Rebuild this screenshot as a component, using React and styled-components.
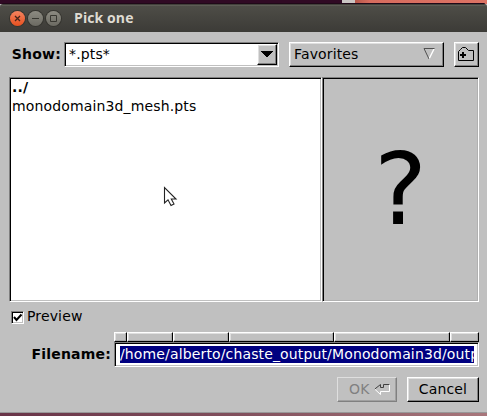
import React from "react";
import styled, { createGlobalStyle, css } from "styled-components";

const GlobalStyle = createGlobalStyle`
  * { box-sizing: border-box; }
  body { margin: 0; overflow: hidden; background: #c0c0c0; }
`;

const raised = css`
  border: 1px solid;
  border-color: #fff #000 #000 #fff;
  box-shadow: inset -1px -1px 0 #808080, inset 1px 1px 0 #dfdfdf;
`;

const sunken = css`
  border: 1px solid;
  border-color: #808080 #fff #fff #808080;
  box-shadow: inset 1px 1px 0 #000, inset -1px -1px 0 #c0c0c0;
`;

const Screen = styled.div`
  width: 487px;
  height: 416px;
  display: flex;
  flex-direction: column;
  overflow: hidden;
  background: #c0c0c0;
  font: 14px/18px "DejaVu Sans", sans-serif;
  letter-spacing: 0.14px;
  color: #000;
  cursor: default;
`;

const Desktop = styled.div`
  height: 4px;
  flex: none;
  background: linear-gradient(90deg, #300a24 0 342px, #cac5c3 342px 355px, #b5574a 355px, #d76c5e 370px, #dd7364 100%);
`;

const TitleBar = styled.header`
  height: 28px;
  flex: none;
  display: flex;
  align-items: center;
  padding-left: 10px;
  border-top: 1px solid #42413b;
  border-radius: 3px 3px 0 0;
  background: linear-gradient(#5d5c55 0 1px, #4e4d47 1px, #3c3b37 100%);
  box-shadow: 0 -3px 0 -2px #200818;
`;

const WindowButton = styled.span`
  width: 15px;
  height: 15px;
  margin-right: 3px;
  border-radius: 50%;
  box-shadow: 0 0 0 1px #35342f;
  background: ${(p) => (p.$close ? "linear-gradient(#f58460, #e6501f)" : "linear-gradient(#8d8b82, #6b6a62)")};
  svg { display: block; }
`;

const Title = styled.h1`
  margin: 0 0 1px 10px;
  font: bold 14px/18px "Open Sans", sans-serif;
  letter-spacing: 0.1px;
  color: #dfdbd2;
`;

const Dialog = styled.main`
  height: 381px;
  flex: none;
  padding: 10px 8px 0 9px;
  border-bottom: 1px solid #989898;
  display: flex;
  flex-direction: column;
`;

const Shadow = styled.div`
  height: 3px;
  background: linear-gradient(90deg, #683347, #82505d 50%, #a8767b);
`;

const Toolbar = styled.div`
  display: flex;
  height: 25px;
`;

const Label = styled.label`
  width: ${(p) => p.$width}px;
  padding-right: 3px;
  text-align: right;
  font-weight: bold;
  line-height: 25px;
  letter-spacing: 0.2px;
  white-space: nowrap;
`;

const Combo = styled.div`
  ${sunken}
  width: 215px;
  padding: 1px 1px 1px 4px;
  display: flex;
  justify-content: space-between;
  background: #fff;
  line-height: 21px;
`;

const ComboArrow = styled.span`
  ${raised}
  width: 20px;
  height: 21px;
  display: grid;
  place-items: center;
  background: #c0c0c0;
`;

const Button = styled.button`
  ${raised}
  width: ${(p) => p.$width}px;
  height: 25px;
  margin: 0 0 0 10px;
  padding: ${(p) => p.$padding || "0 0 2px"};
  display: flex;
  align-items: center;
  justify-content: ${(p) => p.$justify || "center"};
  background: #c0c0c0;
  color: #000;
  font: inherit;
  letter-spacing: inherit;
  border-radius: 0;
  svg { flex: none; }
  &:disabled {
    color: #808080;
    border-color: #dfdfdf #808080 #808080 #dfdfdf;
    box-shadow: inset -1px -1px 0 #a0a0a0;
  }
`;

const Panes = styled.div`
  display: flex;
  height: 225px;
  margin-top: 10px;
`;

const FileList = styled.div`
  ${sunken}
  position: relative;
  width: 313px;
  padding: 0 2px;
  background: #fff;
`;

const FileRow = styled.div`
  height: 19px;
  line-height: 18px;
  font-weight: ${(p) => (p.$folder ? "bold" : "normal")};
`;

const Pointer = styled.svg`
  position: absolute;
  left: 153px;
  top: 108px;
`;

const PreviewPane = styled.div`
  ${sunken}
  width: 157px;
  box-shadow: inset 1px 1px 0 #000, inset -1px -1px 0 #b0b0b0;
  text-align: center;
  font-size: 100px;
  line-height: 223px;
`;

const PreviewOption = styled.label`
  display: flex;
  align-items: center;
  height: 18px;
  margin: 6px 0 0 2px;
  gap: 3px;
`;

const OptionText = styled.span`
  padding-bottom: 2px;
`;

const Check = styled.span`
  ${sunken}
  width: 13px;
  height: 13px;
  background: #fff;
  svg { display: block; }
`;

const PathRow = styled.div`
  display: flex;
  align-items: flex-end;
  margin-top: 6px;
`;

const PathField = styled.div`
  width: 365px;
`;

const PathSegments = styled.div`
  display: grid;
  grid-template-columns: 13px 46px 56px 105px 116px 29px;
  height: 10px;
`;

const Segment = styled.span`
  ${raised}
  box-shadow: inset -1px -1px 0 #a8a8a8, inset 1px 1px 0 #dfdfdf;
`;

const FilenameInput = styled.div`
  ${sunken}
  height: 25px;
  padding: 3px 4px 3px 5px;
  background: #fff;
`;

const Selection = styled.div`
  height: 17px;
  overflow: hidden;
  white-space: nowrap;
  line-height: 17px;
  background: #000080;
  color: #fff;
`;

const Actions = styled.div`
  display: flex;
  justify-content: flex-end;
  margin-top: 10px;
`;

const SEGMENTS = ["root", "home", "user", "output", "project", "folder"];

export default function App() {
  return (
    <Screen>
      <GlobalStyle />
      <Desktop />
      <TitleBar>
        <WindowButton $close>
          <svg width="15" height="15"><path d="M5 5l5 5M10 5l-5 5" stroke="#46251b" strokeWidth="1.3" /></svg>
        </WindowButton>
        <WindowButton>
          <svg width="15" height="15"><path d="M4 7.5h7" stroke="#383731" /></svg>
        </WindowButton>
        <WindowButton>
          <svg width="15" height="15"><path d="M4.5 4.5h6v6h-6z" stroke="#383731" fill="none" /></svg>
        </WindowButton>
        <Title>Pick one</Title>
      </TitleBar>
      <Dialog>
        <Toolbar>
          <Label $width={55}>Show:</Label>
          <Combo>
            *.pts*
            <ComboArrow>
              <svg width="12" height="7" shapeRendering="crispEdges"><path d="M0 0h12L6 6.5z" /></svg>
            </ComboArrow>
          </Combo>
          <Button $width={155} $justify="space-between" $padding="0 8px 1px 4px">
            Favorites
            <svg width="12" height="12" fill="none">
              <path d="M11 1L6 11" stroke="#fff" strokeWidth="1.4" />
              <path d="M11.5 .5H1L6 11" stroke="#505050" />
            </svg>
          </Button>
          <Button $width={25} $padding="0 0 1px">
            <svg width="17" height="14" fill="none">
              <path d="M.5 13.5V4.5l2-2 2-2h3l3 3h5v10z" stroke="#000" />
              <path d="M2 8h6M5 5v6" stroke="#000" strokeWidth="2" />
            </svg>
          </Button>
        </Toolbar>
        <Panes>
          <FileList>
            <FileRow $folder>../</FileRow>
            <FileRow>monodomain3d_mesh.pts</FileRow>
            <Pointer width="15" height="22">
              <path d="M1.5 1.5v15.5l3.5-3.2 3 5.7 3-1.5-2.7-5h4.7z" fill="#fff" stroke="#222" strokeWidth="1.1" />
            </Pointer>
          </FileList>
          <PreviewPane>?</PreviewPane>
        </Panes>
        <PreviewOption>
          <Check>
            <svg width="11" height="11"><path d="M2 5l2.5 3L9.5 2.5" fill="none" stroke="#000" strokeWidth="2" /></svg>
          </Check>
          <OptionText>Preview</OptionText>
        </PreviewOption>
        <PathRow>
          <Label $width={105}>Filename:</Label>
          <PathField>
            <PathSegments>
              {SEGMENTS.map((name) => <Segment key={name} />)}
            </PathSegments>
            <FilenameInput>
              <Selection>/home/alberto/chaste_output/Monodomain3d/outp</Selection>
            </FilenameInput>
          </PathField>
        </PathRow>
        <Actions>
          <Button $width={60} disabled $justify="space-between" $padding="0 6px 2px 11px">
            OK
            <svg width="16" height="12" fill="none">
              <path d="M15.5 1v7.5h-9v3L.8 6.2" stroke="#fff" />
              <path d="M.8 6L6.5 1.5v3h3v-3h6" stroke="#404040" />
            </svg>
          </Button>
          <Button $width={72}>Cancel</Button>
        </Actions>
      </Dialog>
      <Shadow />
    </Screen>
  );
}
